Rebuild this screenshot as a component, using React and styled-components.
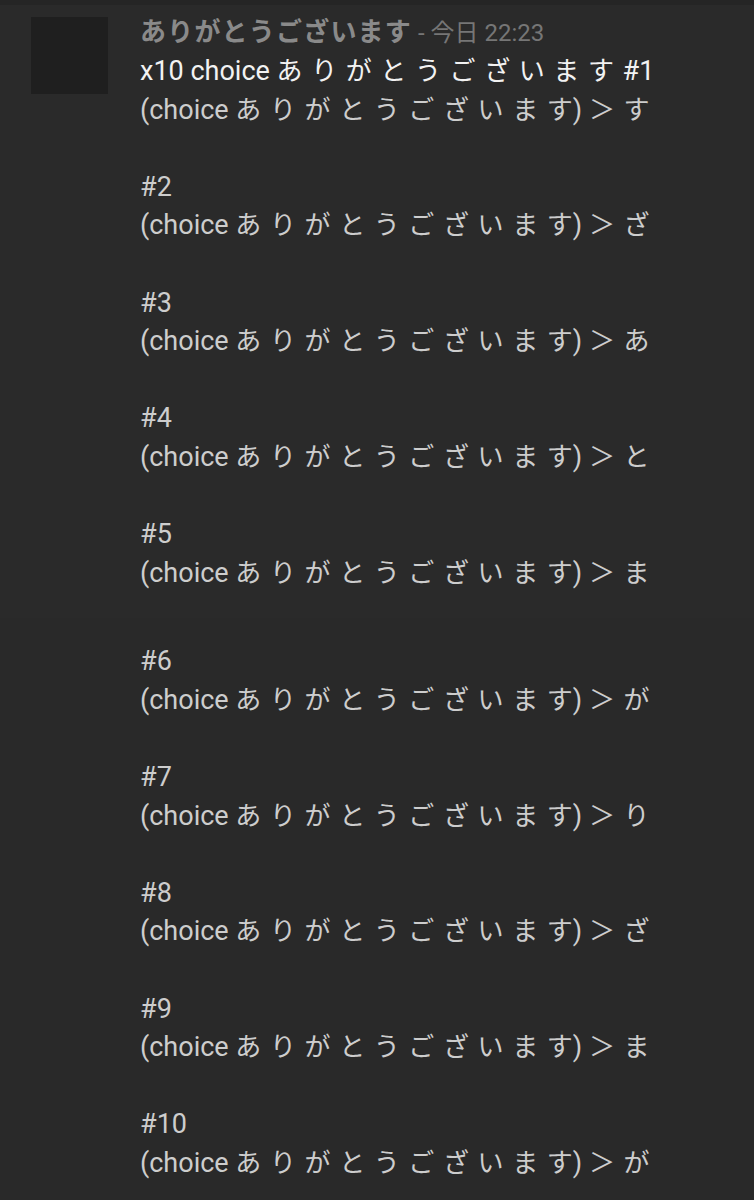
import React from 'react';
import styled, { createGlobalStyle } from 'styled-components';

const GlobalStyle = createGlobalStyle`
  body {
    margin: 0;
    background: #292929;
    font-family: Roboto, "Noto Sans CJK JP", sans-serif;
  }
`;

const Page = styled.div`
  min-height: 1200px;
  background: #292929;
  border-top: 5px solid #252525;
  box-sizing: border-box;
`;

const MessageGroup = styled.div`
  display: flex;
  gap: 32px;
  padding: ${({ $top }) => $top}px 0 ${({ $bottom }) => $bottom}px 31px;
  background: ${({ $bg }) => $bg || 'transparent'};
`;

const Avatar = styled.div`
  flex: 0 0 77px;
  width: 77px;
  height: 77px;
  background: #1f1f1f;
`;

const Spacer = styled.div`
  flex: 0 0 77px;
`;

const Body = styled.div`
  display: flex;
  flex-direction: column;
  min-width: 0;
`;

const Header = styled.div`
  height: 35px;
  font-size: 24px;
  line-height: 30px;
  white-space: nowrap;
`;

const Name = styled.span`
  font-family: "Noto Sans CJK JP", sans-serif;
  font-weight: 700;
  font-size: 26px;
  line-height: 1;
  letter-spacing: 1.2px;
  color: #8a8a8a;
`;

const Stamp = styled.span`
  font-family: Roboto, "Noto Sans CJK JP", sans-serif;
  font-size: 24px;
  color: #767676;
  margin-left: 6px;
`;

const Line = styled.div`
  height: 38.6px;
  line-height: 38.6px;
  font-size: 27px;
  white-space: nowrap;
  color: ${({ $bright }) => ($bright ? '#f2f2f2' : '#cdcdcd')};
`;

const Jp = styled.span`
  font-family: "Noto Sans CJK JP", sans-serif;
  font-size: 26px;
  line-height: 1;
  letter-spacing: ${({ $tight }) => ($tight ? 0 : 8.6)}px;
`;

const WORD = 'ありがとうございます';

const results = ['す', 'ざ', 'あ', 'と', 'ま', 'が', 'り', 'ざ', 'ま', 'が'];

function Choice({ pick }) {
  return (
    <Line>
      (choice <Jp>{WORD.slice(0, -1)}</Jp>
      <Jp $tight>{WORD.slice(-1)}</Jp>) <Jp>＞</Jp>
      <Jp $tight>{pick}</Jp>
    </Line>
  );
}

function Entry({ n, pick }) {
  return (
    <>
      <Line>#{n}</Line>
      <Choice pick={pick} />
    </>
  );
}

export default function App() {
  return (
    <>
      <GlobalStyle />
      <Page>
        <MessageGroup $top={12} $bottom={26} $bg="#2a2a2a">
          <Avatar />
          <Body>
            <Header>
              <Name>{WORD}</Name>
              <Stamp>- 今日 22:23</Stamp>
            </Header>
            <Line $bright>
              x10 choice <Jp>{WORD}</Jp>#1
            </Line>
            <Choice pick={results[0]} />
            {results.slice(1, 5).map((r, i) => (
              <React.Fragment key={i}>
                <Line />
                <Entry n={i + 2} pick={r} />
              </React.Fragment>
            ))}
          </Body>
        </MessageGroup>
        <MessageGroup $top={24} $bottom={0}>
          <Spacer />
          <Body>
            {results.slice(5).map((r, i) => (
              <React.Fragment key={i}>
                {i > 0 && <Line />}
                <Entry n={i + 6} pick={r} />
              </React.Fragment>
            ))}
          </Body>
        </MessageGroup>
      </Page>
    </>
  );
}
